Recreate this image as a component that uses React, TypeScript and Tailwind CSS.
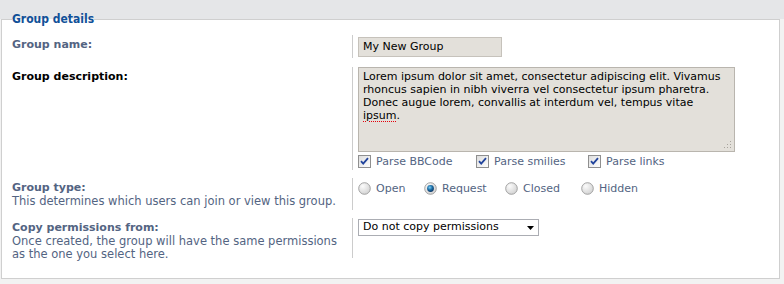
import React from "react";

function Check() {
  return (
    <svg width="13" height="13" viewBox="0 0 13 13" className="shrink-0">
      <defs>
        <linearGradient id="cbg" x1="0" y1="0" x2="1" y2="1">
          <stop offset="0" stopColor="#dcdcdc" />
          <stop offset="1" stopColor="#ffffff" />
        </linearGradient>
      </defs>
      <rect x="0.5" y="0.5" width="12" height="12" fill="url(#cbg)" stroke="#8f8f8f" />
      <path d="M3 6.2l2.2 2.4L10 3.2" fill="none" stroke="#21449c" strokeWidth="1.8" />
    </svg>
  );
}

function Radio({ on }: { on?: boolean }) {
  return (
    <svg width="13" height="13" viewBox="0 0 13 13" className="shrink-0">
      <defs>
        <radialGradient id="rbg" cx="0.35" cy="0.3" r="0.8">
          <stop offset="0" stopColor="#fbfbfb" />
          <stop offset="1" stopColor="#cfcfcf" />
        </radialGradient>
        <radialGradient id="rdot" cx="0.4" cy="0.35" r="0.7">
          <stop offset="0" stopColor="#7fd0f5" />
          <stop offset="0.5" stopColor="#1c6fa8" />
          <stop offset="1" stopColor="#0b2f5c" />
        </radialGradient>
      </defs>
      <circle cx="6.5" cy="6.5" r="5.8" fill="url(#rbg)" stroke="#9a9a9a" strokeWidth="0.9" />
      {on && <circle cx="6.5" cy="6.5" r="3.4" fill="url(#rdot)" />}
    </svg>
  );
}

function Row({ label, explain, dark, children, h, mt }: { label: string; explain?: React.ReactNode; dark?: boolean; children: React.ReactNode; h: string; mt: string }) {
  return (
    <div className={`flex ${h} ${mt}`}>
      <div className="w-[340px] shrink-0 pt-[3px]">
        <div className={`text-[11px] font-bold leading-[14px] ${dark ? "text-black" : "text-[#536482]"}`}>{label}</div>
        {explain && <div className="text-[11.5px] leading-[13px] text-[#536482]">{explain}</div>}
      </div>
      <div className="flex-1 border-l border-[#cccccc] pl-[5px]">{children}</div>
    </div>
  );
}

export default function App() {
  return (
    <div className="h-[284px] w-[784px] bg-[linear-gradient(to_bottom,#e5e6e8_19px,#f2f2f2_19px)] pl-px pt-[10px] font-['DejaVu_Sans',Verdana,sans-serif]">
      <fieldset className="h-[269px] w-[779px] border border-[#cfcfcf] bg-white px-[10px]">
        <legend className="font-['DejaVu_Sans_Condensed','DejaVu_Sans',sans-serif] text-[12px] font-bold leading-[18px] text-[#115098]">Group details</legend>

        <div className="flex flex-col">
          <Row label="Group name:" h="h-[23px]" mt="mt-[7px]">
            <div className="mt-[2px] flex h-[20px] w-[144px] items-center border border-[#c6c2bb] bg-[#e3e0da] px-[4px] text-[11px] text-black">
              My New Group
            </div>
          </Row>

          <Row label="Group description:" dark h="h-[103px]" mt="mt-[9px]">
            <div className="relative h-[85px] w-[377px] border border-[#b9b5ae] bg-[#e3e0da] px-[4px] pt-[2px] text-[11px] leading-[13px] whitespace-nowrap text-black">
              Lorem ipsum dolor sit amet, consectetur adipiscing elit. Vivamus
              <br />
              rhoncus sapien in nibh viverra vel consectetur ipsum pharetra.
              <br />
              Donec augue lorem, convallis at interdum vel, tempus vitae
              <br />
              <span className="underline decoration-red-600 decoration-dotted decoration-1 underline-offset-2">ipsum</span>.
              <svg width="9" height="9" viewBox="0 0 9 9" className="absolute bottom-[2px] right-[2px]">
                <g fill="#a8a49d">
                  <rect x="7" y="1" width="1" height="1" />
                  <rect x="4" y="4" width="1" height="1" />
                  <rect x="7" y="4" width="1" height="1" />
                  <rect x="1" y="7" width="1" height="1" />
                  <rect x="4" y="7" width="1" height="1" />
                  <rect x="7" y="7" width="1" height="1" />
                </g>
              </svg>
            </div>
            <div className="mt-[2px] flex items-center text-[11px] leading-[15px] text-[#536482]">
              <label className="flex w-[118px] items-center gap-[5px]"><Check />Parse BBCode</label>
              <label className="flex w-[112px] items-center gap-[5px]"><Check />Parse smilies</label>
              <label className="flex items-center gap-[5px]"><Check />Parse links</label>
            </div>
          </Row>

          <Row label="Group type:" explain="This determines which users can join or view this group." h="h-[32px]" mt="mt-[8px]">
            <div className="mt-[3px] flex items-center text-[11px] leading-[15px] text-[#536482]">
              <label className="flex w-[66px] items-center gap-[5px]"><Radio />Open</label>
              <label className="flex w-[81px] items-center gap-[5px]"><Radio on />Request</label>
              <label className="flex w-[76px] items-center gap-[5px]"><Radio />Closed</label>
              <label className="flex items-center gap-[5px]"><Radio />Hidden</label>
            </div>
          </Row>

          <Row
            label="Copy permissions from:"
            explain={<>Once created, the group will have the same permissions<br />as the one you select here.</>}
            h="h-[40px]"
            mt="mt-[8px]"
          >
            <div className="mt-px flex h-[17px] w-[181px] items-center justify-between border border-[#abadb3] bg-white pl-[4px] pr-[4px] text-[11px] text-black">
              <span>Do not copy permissions</span>
              <svg width="7" height="4" viewBox="0 0 7 4"><path d="M0 0h7L3.5 4z" fill="#000" /></svg>
            </div>
          </Row>
        </div>
      </fieldset>
    </div>
  );
}
